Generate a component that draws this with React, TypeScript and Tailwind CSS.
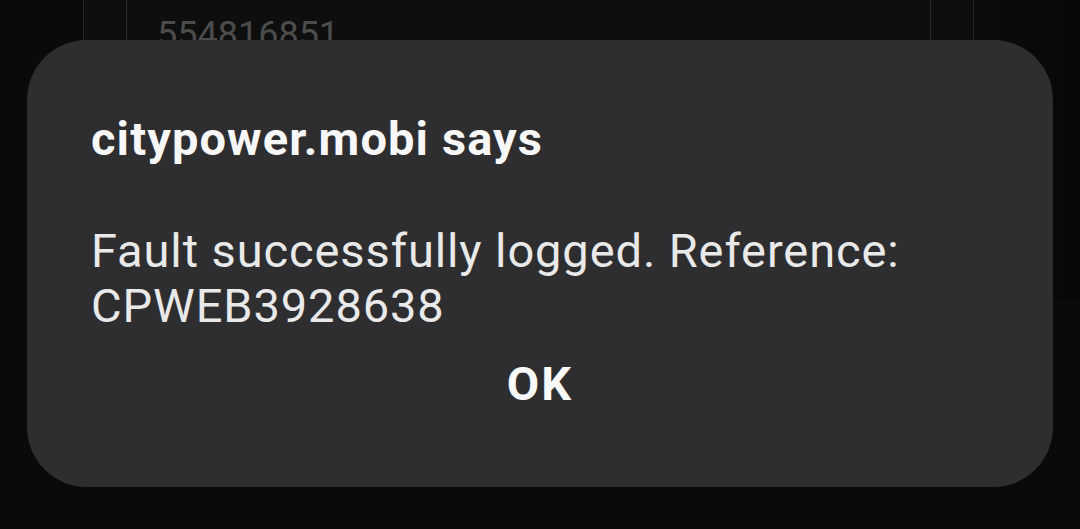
export default function App() {
  return (
    <div className="relative h-[529px] w-[1080px] overflow-hidden bg-[#0a0a0a] font-['Roboto',sans-serif]">
      {/* page behind the dialog */}
      <div className="flex h-[300px]">
        <div className="w-[83px]" />
        <div className="flex w-[891px] border-x border-[#262626] bg-[#0e0e0e] px-[42px]">
          <div className="flex-1 border-x border-[#2a2a2a] pl-[30px] pt-[15px]">
            <p className="text-[36px] leading-[40px] text-[#4c4c4c]">554816851</p>
          </div>
        </div>
        <div className="flex-1 bg-gradient-to-r from-[#0c0c0c] to-[#070707]" />
      </div>

      {/* alert dialog */}
      <div className="absolute left-[27px] top-[40px] flex h-[447px] w-[1026px] flex-col rounded-[60px] bg-[#2e2e30] px-[64px] pt-[71px]">
        <h2 className="text-[47px] font-bold leading-[56px] tracking-[1.1px] text-[#f7f7f7]">
          citypower.mobi says
        </h2>
        <p className="mt-[56px] text-[47px] leading-[55px] tracking-[0.9px] text-[#e9e9e9]">
          Fault successfully logged. Reference:
          <br />
          CPWEB3928638
        </p>
        <div className="mt-[23px] flex justify-center">
          <button type="button" className="text-[47px] font-bold leading-[56px] tracking-[2px] text-[#fafafa]">
            OK
          </button>
        </div>
      </div>
    </div>
  );
}
